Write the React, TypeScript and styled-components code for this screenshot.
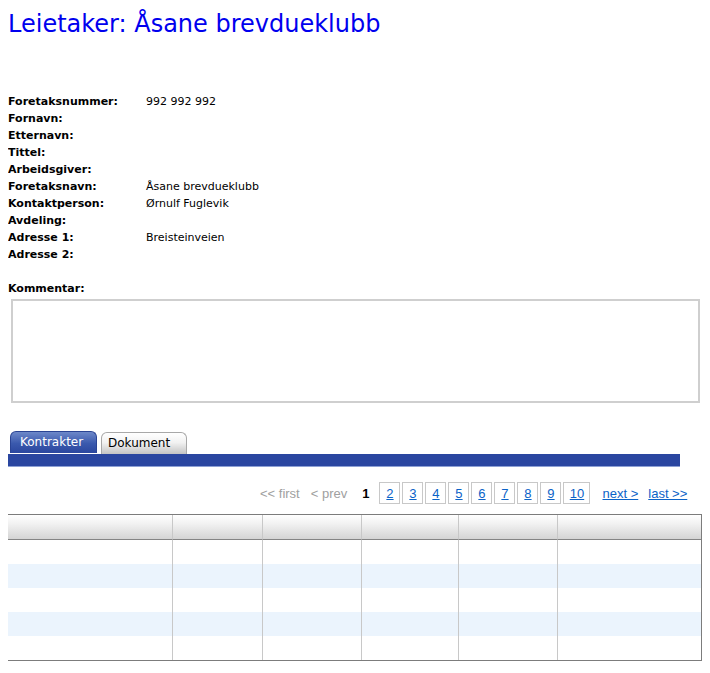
import styled, { createGlobalStyle } from 'styled-components';

const GlobalStyle = createGlobalStyle`
  body {
    margin: 8px;
    background: #ffffff;
    font-family: "DejaVu Sans", Verdana, sans-serif;
    color: #000;
  }
`;

const Page = styled.div`
  display: flex;
  flex-direction: column;
`;

const Title = styled.h1`
  margin: 2px 0 0 0;
  font-size: 24px;
  line-height: 28px;
  font-weight: normal;
  color: #0000ee;
`;

const Details = styled.div`
  display: grid;
  grid-template-columns: 138px 1fr;
  grid-auto-rows: 17px;
  margin-top: 55px;
  font-size: 11px;
  line-height: 17px;
`;

const Label = styled.div`
  font-weight: bold;
`;

const Value = styled.div``;

const CommentLabel = styled.div`
  margin-top: 17px;
  font-size: 11px;
  font-weight: bold;
  line-height: 17px;
`;

const Comment = styled.textarea`
  box-sizing: border-box;
  margin: 2px 0 0 3px;
  width: 689px;
  height: 104px;
  border: 2px solid #cfcfcf;
  resize: none;
  outline: none;
`;

const TabRow = styled.div`
  display: flex;
  gap: 4px;
  margin-top: 28px;
  padding-left: 2px;
  width: 672px;
`;

const Tab = styled.div<{ active?: boolean }>`
  box-sizing: border-box;
  width: ${({ active }) => (active ? '87px' : '86px')};
  height: 22px;
  margin-top: ${({ active }) => (active ? '0' : '1px')};
  padding-left: ${({ active }) => (active ? '9px' : '6px')};
  font-size: 12px;
  line-height: 20px;
  border-radius: 6px 6px 0 0;
  border: 1px solid ${({ active }) => (active ? '#2a4494' : '#a8a8a8')};
  border-bottom: none;
  color: ${({ active }) => (active ? '#ffffff' : '#000000')};
  background: ${({ active }) =>
    active
      ? 'linear-gradient(#6d88c9, #3a59ad 55%, #2b479f)'
      : 'linear-gradient(#ffffff, #f2f2f2 45%, #c4c4c4)'};
`;

const TabBar = styled.div`
  width: 672px;
  height: 13px;
  background: #2a46a0;
  border-bottom: 1px solid #8da0d4;
  box-sizing: border-box;
`;

const Pager = styled.div`
  display: flex;
  align-items: center;
  margin-top: 15px;
  padding-left: 252px;
  height: 22px;
  font-family: "Liberation Sans", Arial, sans-serif;
  font-size: 13px;
`;

const Muted = styled.span`
  color: #a0a0a0;
  margin-right: 11px;
`;

const Current = styled.span`
  font-weight: bold;
  margin: 0 10px 0 4px;
`;

const PageBox = styled.a<{ wide?: boolean }>`
  box-sizing: border-box;
  display: inline-flex;
  justify-content: center;
  align-items: center;
  width: ${({ wide }) => (wide ? '27px' : '21px')};
  height: 22px;
  margin-right: 2px;
  border: 1px solid #c8c8c8;
  color: #0b63c8;
  text-decoration: underline;
`;

const PageLink = styled.a`
  color: #0b63c8;
  text-decoration: underline;
  margin-left: 10px;
`;

const GridFrame = styled.div`
  box-sizing: border-box;
  margin: 10px 0 0 -1px;
  width: 696px;
  border: 1px solid #7c7c7c;
  border-right-width: 2px;
`;

const Grid = styled.table`
  width: 100%;
  border-collapse: separate;
  border-spacing: 0;
  table-layout: fixed;
`;

const HeadCell = styled.th`
  height: 24px;
  padding: 0;
  border-right: 1px solid #c8c8c8;
  border-bottom: 1px solid #848484;
  background: linear-gradient(#ffffff, #f0f0f0 40%, #d4d4d4);
  &:last-child {
    border-right: none;
  }
`;

const Row = styled.tr<{ odd?: boolean }>`
  background: ${({ odd }) => (odd ? '#ebf4fd' : '#ffffff')};
`;

const Cell = styled.td`
  height: 24px;
  padding: 0;
  border-right: 1px solid #c8c8c8;
  &:last-child {
    border-right: none;
  }
`;

const fields: [string, string][] = [
  ['Foretaksnummer:', '992 992 992'],
  ['Fornavn:', ''],
  ['Etternavn:', ''],
  ['Tittel:', ''],
  ['Arbeidsgiver:', ''],
  ['Foretaksnavn:', 'Åsane brevdueklubb'],
  ['Kontaktperson:', 'Ørnulf Fuglevik'],
  ['Avdeling:', ''],
  ['Adresse 1:', 'Breisteinveien'],
  ['Adresse 2:', ''],
];

// widths include each cell's right divider
const colWidths = [165, 90, 99, 97, 99, 143];

export default function App() {
  return (
    <Page>
      <GlobalStyle />
      <Title>Leietaker: Åsane brevdueklubb</Title>
      <Details>
        {fields.flatMap(([label, value]) => [
          <Label key={label}>{label}</Label>,
          <Value key={label + 'v'}>{value}</Value>,
        ])}
      </Details>
      <CommentLabel>Kommentar:</CommentLabel>
      <Comment />
      <TabRow>
        <Tab active>Kontrakter</Tab>
        <Tab>Dokument</Tab>
      </TabRow>
      <TabBar />
      <Pager>
        <Muted>&lt;&lt; first</Muted>
        <Muted>&lt; prev</Muted>
        <Current>1</Current>
        {[2, 3, 4, 5, 6, 7, 8, 9, 10].map(n => (
          <PageBox key={n} wide={n === 10}>
            {n}
          </PageBox>
        ))}
        <PageLink>next &gt;</PageLink>
        <PageLink>last &gt;&gt;</PageLink>
      </Pager>
      <GridFrame>
        <Grid>
          <colgroup>
            {colWidths.map((w, i) => (
              <col key={i} style={{ width: w }} />
            ))}
          </colgroup>
          <thead>
            <tr>
              {colWidths.map((_, i) => (
                <HeadCell key={i} />
              ))}
            </tr>
          </thead>
          <tbody>
            {[0, 1, 2, 3, 4].map(r => (
              <Row key={r} odd={r % 2 === 1}>
                {colWidths.map((_, i) => (
                  <Cell key={i} />
                ))}
              </Row>
            ))}
          </tbody>
        </Grid>
      </GridFrame>
    </Page>
  );
}
